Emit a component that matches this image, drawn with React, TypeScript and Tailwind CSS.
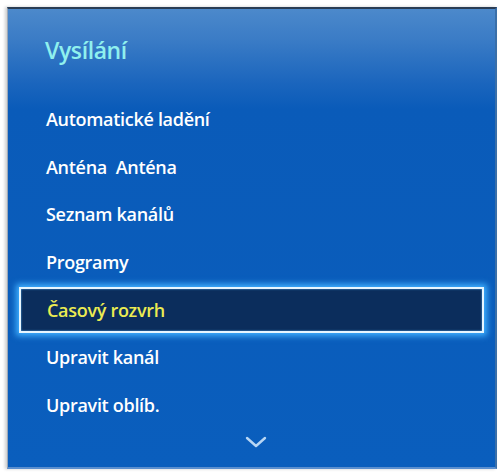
import React from 'react';

const items = [
    'Automatické ladění',
    'Anténa  Anténa',
    'Seznam kanálů',
    'Programy',
    'Časový rozvrh',
    'Upravit kanál',
    'Upravit oblíb.',
];

const SELECTED = 4;

export default function App() {
    return (
        <div className="w-[501px] h-[473px] bg-white pt-[7px] pl-[7px] pr-[4px] pb-[4px]" style={{ fontFamily: '"Open Sans", "Noto Sans", sans-serif' }}>
            <div className="h-full w-full border-t-2 border-t-[#2a3d55] border-l border-l-[#9aa7b8] border-r-2 border-r-[#3a6fa8] border-b-2 border-b-[#5b8fcf] bg-[linear-gradient(to_bottom,#4c89cb_0px,#3b7cc6_30px,#1a65bd_75px,#0a5bb9_100px,#0a5ebd_100%)] shadow-[-2px_0_3px_rgba(0,0,0,0.2)] flex flex-col">
                {/* Title */}
                <div className="h-[87px] pl-[37px] pt-[30px]">
                    <h1 className="text-[23px] font-semibold text-[#8ff0ee] leading-none tracking-[-0.4px]">Vysílání</h1>
                </div>

                {/* Menu */}
                <div className="flex flex-col px-[11px]">
                    {items.map((label, i) =>
                        i === SELECTED ? (
                            <div
                                key={label}
                                className="h-[46px] my-[1px] flex items-center pl-[26px] bg-[#0b2d5c] border-2 border-[#e6f6ff] shadow-[0_0_6px_3px_#3fb0ff,inset_0_0_2px_#5ab8ff] text-[#ecec52] text-[18px] font-semibold tracking-[-0.3px] whitespace-pre"
                            >
                                {label}
                            </div>
                        ) : (
                            <div
                                key={label}
                                className="h-[47.5px] flex items-center pl-[27px] text-white text-[18px] font-semibold tracking-[-0.3px] whitespace-pre"
                            >
                                {label}
                            </div>
                        )
                    )}
                </div>

                {/* Scroll indicator */}
                <div className="flex justify-center pt-[7px] pl-[8px]">
                    <svg width="22" height="12" viewBox="0 0 22 12" fill="none">
                        <polyline points="2,2 11,10 20,2" stroke="#b8d6f4" strokeWidth="2.4" strokeLinecap="round" strokeLinejoin="round" />
                    </svg>
                </div>
            </div>
        </div>
    );
}
